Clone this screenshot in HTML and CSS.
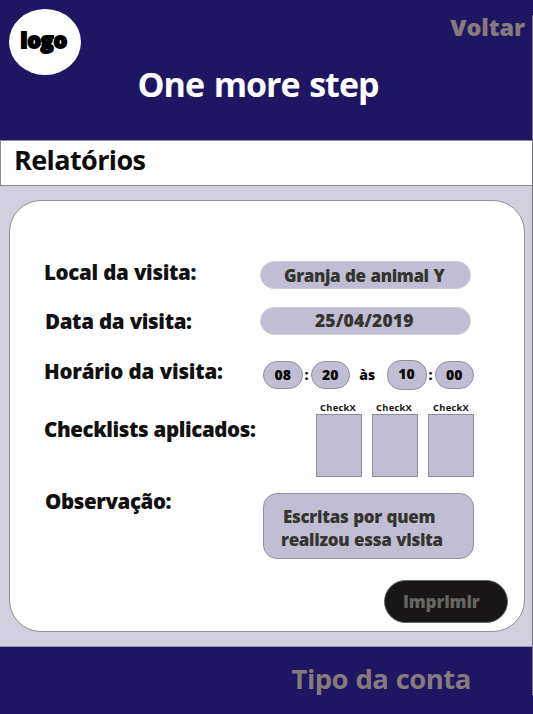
FILE: index.html
```html
<!DOCTYPE html>
<html lang="pt-BR">
<head>
<meta charset="utf-8">
<title>One more step</title>
<link rel="stylesheet" href="styles.css">
</head>
<body>
<div class="screen">
  <header class="header">
    <div class="topbar">
      <div class="logo"><span>logo</span></div>
      <a class="back">Voltar</a>
    </div>
    <h1 class="brand">One more step</h1>
  </header>
  <h2 class="title">Relatórios</h2>
  <main class="content">
    <section class="card">
      <div class="form">
        <div class="labels">
          <div class="label local">Local da visita:</div>
          <div class="label data">Data da visita:</div>
          <div class="label horario">Horário da visita:</div>
          <div class="label checklists">Checklists aplicados:</div>
          <div class="label obs">Observação:</div>
        </div>
        <div class="fields">
          <div class="pill place">Granja de animal Y</div>
          <div class="pill date">25/04/2019</div>
          <div class="times">
            <span class="time">08</span><span class="colon">:</span><span class="time">20</span>
            <span class="to">às</span>
            <span class="time raised">10</span><span class="colon">:</span><span class="time">00</span>
          </div>
          <div class="checks">
            <div class="check"><span>CheckX</span><div class="sheet"></div></div>
            <div class="check"><span>CheckX</span><div class="sheet"></div></div>
            <div class="check last"><span>CheckX</span><div class="sheet"></div></div>
          </div>
          <div class="note"><div class="line1">Escritas por quem</div><div class="line2">realizou essa visita</div></div>
        </div>
      </div>
      <button class="print">Imprimir</button>
    </section>
  </main>
  <footer class="footer"><span>Tipo da conta</span></footer>
  <div class="edge"></div>
</div>
</body>
</html>
```
FILE: styles.css
```css
* { box-sizing: border-box; }
body { margin: 0; font-family: "Open Sans", "Noto Sans", sans-serif; font-weight: 700; white-space: nowrap; }
.screen { position: relative; width: 533px; height: 714px; overflow: hidden; background: #d2d0df; }
.header { height: 140px; background: #1f1663; }
.topbar { display: flex; justify-content: space-between; height: 65px; padding: 9px 8px 0 9px; }
.logo { width: 71.5px; height: 66px; flex: none; border-radius: 50%; background: #fff; padding-left: 11.5px; font-size: 21px; font-weight: 800; line-height: 62px; letter-spacing: 0.1px; -webkit-text-stroke: 1.9px #000; }
.back { color: #857b7c; font-size: 23.5px; font-weight: 800; line-height: 37px; letter-spacing: -0.1px; }
.brand { margin: 0; padding-left: 137.5px; color: #fff; font-size: 34px; font-weight: 700; line-height: 38px; letter-spacing: -1px; word-spacing: 1.8px; }
.title { margin: 0; height: 46px; border: 1px solid #8d8b95; background: #fff; color: #0b0b0b; padding-left: 13px; font-size: 27px; font-weight: 700; line-height: 38px; letter-spacing: -0.6px; }
.content { height: 461px; padding: 14px 8px 0 9px; border-bottom: 1px solid #9c98ae; }
.card { height: 432px; padding-top: 57px; border: 1px solid #929198; border-radius: 32px; background: #fff; }
.form { display: flex; height: 322px; padding-left: 33px; }
.labels { width: 217px; flex: none; padding-left: 1px; }
.label { font-size: 20.5px; line-height: 28px; font-weight: 800; color: #111; letter-spacing: -0.35px; word-spacing: 0.5px; }
.data { margin-top: 21px; padding-left: 1px; letter-spacing: -0.37px; }
.horario { margin-top: 22px; letter-spacing: -0.22px; }
.checklists { margin-top: 30px; letter-spacing: -0.4px; }
.obs { margin-top: 44px; padding-left: 1px; letter-spacing: -0.4px; }
.fields { width: 214px; padding-top: 3px; }
.pill { width: 211px; height: 28px; border: 1px solid #d2d1d8; border-radius: 14px; background: #c1bdd3; color: #353530; font-size: 17.5px; font-weight: 800; line-height: 27px; }
.place { padding-left: 23px; font-size: 17px; line-height: 28px; letter-spacing: -0.4px; word-spacing: 0.8px; }
.date { margin-top: 18px; padding-left: 54px; line-height: 25px; letter-spacing: 0.1px; }
.times { display: flex; height: 29px; margin: 25px 0 0 3px; font-size: 14px; line-height: 26px; color: #080808; font-weight: 800; }
.time { width: 39.5px; height: 28px; margin-top: 1px; border: 1px solid #929099; border-radius: 14px; background: #c1bdd3; text-align: center; }
.raised { width: 40px; height: 30px; margin-top: 0; }
.colon { width: 8px; text-align: center; line-height: 29px; }
.to { width: 36.5px; padding-right: 2px; text-align: center; line-height: 29px; }
.checks { display: flex; gap: 10px; margin: 13px 0 0 56px; }
.check { width: 46px; color: #111; font-size: 9.3px; line-height: 12px; letter-spacing: 0.3px; }
.check span { display: block; padding-left: 4px; }
.check.last span { padding-left: 5px; }
.sheet { height: 63px; border: 1px solid #8e8c98; background: #c1bdd3; }
.note { width: 211px; height: 66px; margin: 16px 0 0 3px; padding-top: 10.5px; border: 1px solid #929099; border-radius: 14px; background: #c1bdd3; color: #353530; font-size: 17px; font-weight: 800; line-height: 23px; letter-spacing: -0.32px; word-spacing: 0.6px; }
.line1 { padding-left: 19px; }
.line2 { padding-left: 17px; }
.print { display: block; width: 124px; height: 43px; margin: 0 0 0 374px; padding: 0 0 0 18px; border: 1px solid #66646a; border-radius: 22px; background: #181617; color: #66655f; font: 800 17px/40px "Open Sans", sans-serif; text-align: left; letter-spacing: -0.15px; }
.footer { height: 67px; background: #1f1663; color: #857b7c; padding-left: 291.5px; font-size: 27.5px; line-height: 64px; letter-spacing: -0.55px; word-spacing: 0.8px; }
.edge { position: absolute; top: 15px; right: 0; width: 1px; height: 680px; background: #77757b; }
```
